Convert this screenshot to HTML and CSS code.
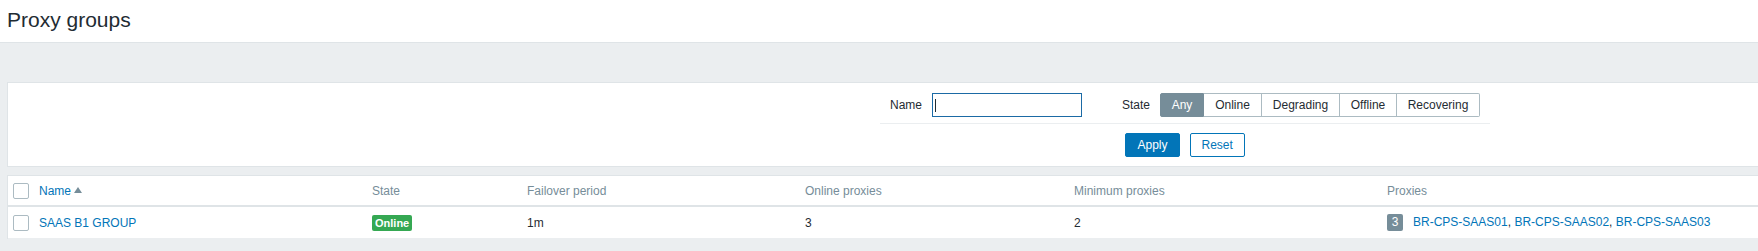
FILE: index.html
```html
<!DOCTYPE html>
<html lang="en">
<head>
<meta charset="utf-8">
<title>Proxy groups</title>
<link rel="stylesheet" href="styles.css">
</head>
<body>
<div class="page">
  <header class="page-header">
    <h1 class="page-title">Proxy groups</h1>
  </header>
  <main class="content">
    <section class="filter">
      <div class="filter-form">
        <div class="filter-row">
          <div class="field">
            <label class="field-label" for="filter-name">Name</label>
            <div class="input-wrap"><input class="text-input" id="filter-name" type="text"></div>
          </div>
          <div class="field field-state">
            <span class="field-label field-label-state">State</span>
            <ul class="radio-list">
              <li class="radio-item radio-any is-checked">Any</li>
              <li class="radio-item radio-online">Online</li>
              <li class="radio-item radio-degrading">Degrading</li>
              <li class="radio-item radio-offline">Offline</li>
              <li class="radio-item radio-recovering">Recovering</li>
            </ul>
          </div>
        </div>
        <div class="filter-buttons">
          <button class="btn btn-primary" type="button">Apply</button>
          <button class="btn btn-alt" type="button">Reset</button>
        </div>
      </div>
    </section>

    <section class="list">
      <div class="list-row list-head">
        <div class="cell"><span class="checkbox"></span></div>
        <div class="cell"><a class="link" href="#">Name</a><span class="sort-arrow"></span></div>
        <div class="cell">State</div>
        <div class="cell">Failover period</div>
        <div class="cell">Online proxies</div>
        <div class="cell">Minimum proxies</div>
        <div class="cell">Proxies</div>
      </div>
      <div class="list-row list-data">
        <div class="cell"><span class="checkbox"></span></div>
        <div class="cell"><a class="link" href="#">SAAS B1 GROUP</a></div>
        <div class="cell"><span class="status status-green">Online</span></div>
        <div class="cell">1m</div>
        <div class="cell">3</div>
        <div class="cell">2</div>
        <div class="cell"><span class="count-badge">3</span><a class="link" href="#">BR-CPS-SAAS01</a>, <a class="link" href="#">BR-CPS-SAAS02</a>, <a class="link" href="#">BR-CPS-SAAS03</a></div>
      </div>
    </section>
  </main>
</div>
</body>
</html>
```

FILE: styles.css
```css
html, body {
  margin: 0;
  padding: 0;
  overflow: hidden;
}

body {
  background: #ebeef0;
  font-family: "Liberation Sans", Arial, sans-serif;
  font-size: 12px;
  color: #1f2c33;
}

.page {
  width: 2370px;
}

.page-header {
  box-sizing: border-box;
  height: 43px;
  padding: 8px 7px 0;
  background: #ffffff;
  border-bottom: 1px solid #dfe4e7;
}

.page-title {
  margin: 0;
  font-size: 21px;
  font-weight: normal;
  line-height: 24px;
  color: #1f2c33;
}

.content {
  padding: 39px 7px 0;
}

/* Filter */
.filter {
  background: #ffffff;
  border: 1px solid #dfe4e7;
  padding: 10px 0 9px;
}

.filter-form {
  width: 610px;
  margin: 0 auto;
}

.filter-row {
  display: flex;
  align-items: center;
  padding: 0 10px 6px;
  border-bottom: 1px solid #ebeef0;
}

.field {
  display: flex;
  align-items: center;
}

.field-label {
  width: 42px;
  line-height: 24px;
  color: #1f2c33;
}

.field-state {
  margin-left: 40px;
}

.field-label-state {
  width: 38px;
}

.input-wrap {
  position: relative;
  width: 150px;
  height: 24px;
}

.text-input {
  box-sizing: border-box;
  width: 150px;
  height: 24px;
  margin: 0;
  padding: 0 5px;
  border: 1px solid #1b6aa5;
  background: #ffffff;
  font: inherit;
  outline: none;
}

.input-wrap::after {
  content: "";
  position: absolute;
  left: 3px;
  top: 6px;
  width: 1px;
  height: 13px;
  background: #1f2c33;
}

.radio-list {
  display: flex;
  margin: 0;
  padding: 0;
  list-style: none;
}

.radio-item {
  box-sizing: border-box;
  height: 24px;
  line-height: 22px;
  text-align: center;
  border: 1px solid #acbbc2;
  border-left: 0;
  background: #ffffff;
  color: #1f2c33;
  white-space: nowrap;
}

.radio-any {
  width: 44px;
  border-left: 1px solid #768d99;
  border-radius: 2px 0 0 2px;
}

.radio-online { width: 58px; }
.radio-degrading { width: 78px; }
.radio-offline { width: 57px; }

.radio-recovering {
  width: 83px;
  border-radius: 0 2px 2px 0;
}

.radio-item.is-checked {
  background: #768d99;
  border-color: #768d99;
  color: #ffffff;
}

.filter-buttons {
  display: flex;
  justify-content: center;
  gap: 10px;
  padding-top: 9px;
}

.btn {
  box-sizing: border-box;
  height: 24px;
  margin: 0;
  padding: 0 11px;
  border: 1px solid #0275b8;
  border-radius: 2px;
  font: inherit;
  line-height: 22px;
  cursor: pointer;
}

.btn-primary {
  background: #0275b8;
  color: #ffffff;
}

.btn-alt {
  width: 55px;
  background: #ffffff;
  color: #0275b8;
}

/* List */
.list {
  margin-top: 8px;
  background: #ffffff;
  border: 1px solid #dfe4e7;
  border-bottom: 0;
}

.list-row {
  display: grid;
  grid-template-columns: 26px 333px 155px 278px 269px 313px 1fr;
  align-items: center;
}

.list-head {
  height: 29px;
  border-bottom: 2px solid #dfe4e7;
  color: #768d99;
}

.list-data {
  height: 31px;
  border-bottom: 1px solid #ebeef0;
  color: #1f2c33;
}

.cell {
  padding-left: 5px;
  line-height: 16px;
  white-space: nowrap;
}

.checkbox {
  box-sizing: border-box;
  display: inline-block;
  vertical-align: middle;
  width: 16px;
  height: 16px;
  border: 1px solid #acbbc2;
  border-radius: 2px;
  background: #ffffff;
}

.link {
  color: #0275b8;
  text-decoration: none;
}

.sort-arrow {
  display: inline-block;
  vertical-align: middle;
  width: 0;
  height: 0;
  margin-left: 3px;
  margin-top: -2px;
  border-left: 4px solid transparent;
  border-right: 4px solid transparent;
  border-bottom: 6px solid #768d99;
}

.status {
  display: inline-block;
  vertical-align: middle;
  height: 16px;
  line-height: 16px;
  padding: 0 3px;
  border-radius: 2px;
  background: #35a853;
  color: #ffffff;
  font-weight: bold;
  font-size: 11px;
}

.count-badge {
  display: inline-block;
  vertical-align: middle;
  width: 16px;
  height: 17px;
  line-height: 17px;
  margin-right: 10px;
  border-radius: 2px;
  background: #768d99;
  color: #ffffff;
  text-align: center;
}
```
